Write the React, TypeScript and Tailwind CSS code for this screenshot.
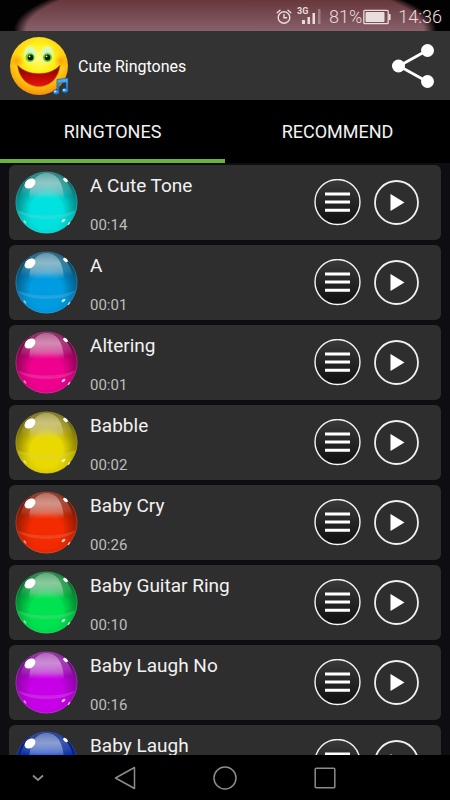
import { useState } from "react";

type Tone = {
  name: string;
  time: string;
  color: string;
  dark: string;
  top: string;
};

const tones: Tone[] = [
  { name: "A Cute Tone", time: "00:14", color: "#00e2df", dark: "#04605f", top: "#a6cfce" },
  { name: "A", time: "00:01", color: "#009ce2", dark: "#04405f", top: "#a4c6d2" },
  { name: "Altering", time: "00:01", color: "#f0008f", dark: "#64063e", top: "#dba2c1" },
  { name: "Babble", time: "00:02", color: "#ead900", dark: "#5c5606", top: "#d0ca90" },
  { name: "Baby Cry", time: "00:26", color: "#f42a00", dark: "#651504", top: "#d8a89f" },
  { name: "Baby Guitar Ring", time: "00:10", color: "#00e24f", dark: "#046025", top: "#a2d1b0" },
  { name: "Baby Laugh No", time: "00:16", color: "#c800e8", dark: "#6b0b7c", top: "#d6a4dd" },
  { name: "Baby Laugh", time: "", color: "#0038dc", dark: "#04196f", top: "#a4b4da" },
];

const tabs = ["RINGTONES", "RECOMMEND"];

function StatusBar() {
  return (
    <div className="flex h-[31px] shrink-0 items-center justify-end bg-[radial-gradient(ellipse_47%_58px_at_50%_100%,transparent_94%,#030202_100%),linear-gradient(#67383c,#87606a)] pt-[2px] pr-2 text-[#eadcdc]">
      <svg className="mr-[5px] size-4" viewBox="0 0 16 16" fill="none" stroke="currentColor" strokeWidth="1.4" strokeLinecap="round">
        <circle cx="8" cy="8.500" r="5.800" />
        <path d="M8 5.500v3.200h2.600M1.200 3.700 4 1.300M14.800 3.700 12 1.300" />
      </svg>
      <svg className="mr-2 h-5 w-6" viewBox="0 0 24 20" fill="currentColor">
        <text x="0" y="7" fontSize="9" fontWeight="700" fontFamily="Roboto, sans-serif">3G</text>
        <path d="M5 13h3v4H5zM10.500 10h2.500v7h-2.500zM15.500 6H18v11h-2.500z" />
        <path d="M21 2h2.500v15H21z" opacity=".35" />
      </svg>
      <span className="text-lg font-light">81%</span>
      <svg className="mr-[7px] ml-px h-4 w-7" viewBox="0 0 28 16" fill="none" stroke="currentColor">
        <rect x=".8" y="1.300" width="24.400" height="13.400" rx="1" strokeWidth="1.300" />
        <path d="M3 3.500h18v9H3z" fill="currentColor" />
        <path d="M26.800 5v6" strokeWidth="1.600" />
      </svg>
      <span className="text-lg font-light">14:36</span>
    </div>
  );
}

function SmileyLogo() {
  return (
    <svg className="size-[60px]" viewBox="0 0 60 60">
      <defs>
        <radialGradient id="face" cx=".5" cy=".36" r=".68">
          <stop offset="0" stopColor="#fffd8a" />
          <stop offset=".35" stopColor="#fff21c" />
          <stop offset=".66" stopColor="#ffcb10" />
          <stop offset="1" stopColor="#f4820a" />
        </radialGradient>
        <radialGradient id="eye">
          <stop offset="0" stopColor="#b8f3a0" />
          <stop offset=".6" stopColor="#d2f8d8" />
          <stop offset="1" stopColor="#e4fbb8" stopOpacity=".25" />
        </radialGradient>
        <radialGradient id="cheek">
          <stop offset="0" stopColor="#f47a00" stopOpacity=".55" />
          <stop offset="1" stopColor="#f47a00" stopOpacity="0" />
        </radialGradient>
        <linearGradient id="mouth" x1="0" y1="0" x2="0" y2="1">
          <stop offset="0" stopColor="#6a0a00" />
          <stop offset=".5" stopColor="#b80804" />
          <stop offset="1" stopColor="#e8140c" />
        </linearGradient>
        <linearGradient id="note" x1="0" y1="0" x2="0" y2="1">
          <stop offset="0" stopColor="#58b2f4" />
          <stop offset="1" stopColor="#1c7dd4" />
        </linearGradient>
      </defs>
      <circle cx="30" cy="30" r="29" fill="url(#face)" />
      <circle cx="8" cy="25" r="7" fill="url(#cheek)" />
      <circle cx="52" cy="25" r="7" fill="url(#cheek)" />
      <ellipse cx="21" cy="18.500" rx="6.500" ry="9.500" fill="url(#eye)" />
      <ellipse cx="38.500" cy="18.500" rx="6.500" ry="9.500" fill="url(#eye)" />
      <circle cx="21" cy="21.500" r="4.600" fill="#70d425" />
      <circle cx="38.500" cy="21.500" r="4.600" fill="#70d425" />
      <circle cx="21.500" cy="21.500" r="2.900" fill="#101a05" />
      <circle cx="38.500" cy="21.500" r="2.900" fill="#101a05" />
      <circle cx="20.500" cy="20.300" r=".9" fill="#fff" />
      <circle cx="37.500" cy="20.300" r=".9" fill="#fff" />
      <path d="M8.500 29c5 5.500 12 8.500 21.500 8.500S46 34.500 51 29C50 41 42 50.500 30 50.500S9.500 41 8.500 29z" fill="url(#mouth)" stroke="#c96a00" strokeWidth=".5" />
      <g fill="url(#note)" stroke="#0d4f96" strokeWidth=".6">
        <path d="M48 43.500 59 42v12h-2v-7.500l-7 1v8h-2z" />
        <ellipse cx="47" cy="56" rx="3" ry="2.300" />
        <ellipse cx="56" cy="54.500" rx="3" ry="2.300" />
      </g>
      <circle cx="46" cy="55.500" r=".9" fill="#d6f0ff" />
      <circle cx="55" cy="54" r=".9" fill="#d6f0ff" />
    </svg>
  );
}

function Ball({ id, tone }: { id: string; tone: Tone }) {
  return (
    <svg className="size-[63px] shrink-0" viewBox="0 0 63 63">
      <defs>
        <radialGradient id={`body-${id}`} cx=".5" cy=".62" r=".62">
          <stop offset="0" stopColor={tone.color} />
          <stop offset=".42" stopColor={tone.color} />
          <stop offset="1" stopColor={tone.dark} />
        </radialGradient>
        <linearGradient id={`top-${id}`} x1="0" y1="0" x2="0" y2="1">
          <stop offset="0" stopColor={tone.top} stopOpacity=".55" />
          <stop offset=".4" stopColor={tone.top} stopOpacity=".9" />
          <stop offset=".75" stopColor={tone.top} stopOpacity=".55" />
          <stop offset="1" stopColor={tone.top} stopOpacity="0" />
        </linearGradient>
        <radialGradient id={`low-${id}`} cx=".5" cy=".7" r=".6">
          <stop offset="0" stopColor={tone.color} stopOpacity=".9" />
          <stop offset="1" stopColor={tone.color} stopOpacity=".35" />
        </radialGradient>
      </defs>
      <circle cx="31.500" cy="31.500" r="31" fill={`url(#body-${id})`} />
      <path d="M31.500 1C44 1 54 8 58 25H5C9 8 19 1 31.500 1z" fill={`url(#top-${id})`} opacity=".4" />
      <path d="M31.500 2C41 2 48 10 49 28H14C15 10 22 2 31.500 2z" fill={`url(#top-${id})`} opacity=".85" />
      <path d="M2 39c17 6 42 6 59 0-4 15-16 23-29.500 23S6 54 2 39z" fill={`url(#low-${id})`} />
      <path d="M3 40c16 6 41 6 57 0-5 6-17 8-28.500 8S8 46 3 40z" fill={tone.top} opacity=".22" />
      <circle cx="31.500" cy="31.500" r="30.600" fill="none" stroke={tone.top} strokeOpacity=".3" strokeWidth=".8" />
      <ellipse cx="15" cy="12.500" rx="6" ry="4.300" fill="#fff" transform="rotate(-38 15 12.500)" />
      <ellipse cx="50.500" cy="9" rx="2.800" ry="1.600" fill="#fff" transform="rotate(40 50.500 9)" />
      <ellipse cx="48.500" cy="49.500" rx="2.200" ry="1.300" fill="#fff" opacity=".8" transform="rotate(-40 48.500 49.500)" />
      <ellipse cx="54" cy="52.500" rx="2" ry=".7" fill="#fff" opacity=".7" transform="rotate(-50 54 52.500)" />
      <ellipse cx="10" cy="51" rx="2" ry=".8" fill="#fff" opacity=".6" transform="rotate(48 10 51)" />
    </svg>
  );
}

function ToneRow({ tone, id }: { tone: Tone; id: string }) {
  return (
    <li className="flex h-[75px] shrink-0 items-center rounded-md bg-[#2e2e2e] pr-[22px] pl-[6px]">
      <Ball id={id} tone={tone} />
      <div className="ml-3 flex h-[60px] min-w-0 flex-1 flex-col justify-between pt-px">
        <h2 className="truncate text-[19px] leading-6 text-[#f2f2f2]">{tone.name}</h2>
        {tone.time && <p className="text-[15px] leading-4 text-[#bdbdbd]">{tone.time}</p>}
      </div>
      <button aria-label={`Options for ${tone.name}`} className="mr-[13px]">
        <svg className="size-[47px]" viewBox="0 0 47 47">
          <defs>
            <linearGradient id={`menu-${id}`} x1="0" y1="0" x2="0" y2="1">
              <stop offset="0" stopColor="#3a3a3a" />
              <stop offset="1" stopColor="#101010" />
            </linearGradient>
          </defs>
          <circle cx="23.500" cy="23" r="22.500" fill={`url(#menu-${id})`} stroke="#f4f4f4" strokeWidth="1.400" />
          <path d="M11 15h25M11 23h25M11 31.300h25" stroke="#fff" strokeWidth="3" />
        </svg>
      </button>
      <button aria-label={`Play ${tone.name}`}>
        <svg className="size-[45px]" viewBox="0 0 45 45">
          <circle cx="22.500" cy="22.500" r="21.500" fill="none" stroke="#f0f0f0" strokeWidth="1.800" />
          <path d="M16.500 14v17L30.500 22.500z" fill="#fff" />
        </svg>
      </button>
    </li>
  );
}

function NavBar() {
  return (
    <footer className="grid h-[45px] shrink-0 grid-cols-[3fr_4fr_4fr_4fr_3fr] bg-black text-[#8c8c8c]">
      <button aria-label="Hide bar" className="flex items-center justify-center">
        <svg className="h-2 w-3" viewBox="0 0 12 8" fill="none" stroke="currentColor" strokeWidth="1.800">
          <path d="m1 1.500 5 4.500 5-4.500" />
        </svg>
      </button>
      <button aria-label="Back" className="flex items-center justify-center">
        <svg className="size-6" viewBox="0 0 24 24" fill="none" stroke="currentColor" strokeWidth="1.500" strokeLinejoin="round">
          <path d="M21.500 1.500v21L2.500 12z" />
        </svg>
      </button>
      <button aria-label="Home" className="flex items-center justify-center">
        <svg className="size-6" viewBox="0 0 24 24" fill="none" stroke="currentColor" strokeWidth="1.500">
          <circle cx="12" cy="12" r="11" />
        </svg>
      </button>
      <button aria-label="Recent apps" className="flex items-center justify-center">
        <svg className="size-6" viewBox="0 0 24 24" fill="none" stroke="currentColor" strokeWidth="1.500">
          <rect x="2.200" y="2.200" width="19.600" height="19.600" rx="1" />
        </svg>
      </button>
    </footer>
  );
}

export default function App() {
  const [active, setActive] = useState(0);

  return (
    <div className="flex h-screen flex-col overflow-hidden bg-[#0d0d12] font-[Roboto,sans-serif]">
      <StatusBar />
      <header className="flex h-[69px] shrink-0 items-center bg-[#333333] pr-[15px] pl-[9px]">
        <SmileyLogo />
        <h1 className="ml-[9px] flex-1 pt-[2px] text-base text-white">Cute Ringtones</h1>
        <button aria-label="Share">
          <svg className="h-[46px] w-[44px]" viewBox="0 0 44 46" fill="#fff">
            <path d="M36 7.500 8 23l28 15.500" fill="none" stroke="#fff" strokeWidth="2.800" />
            <circle cx="36.500" cy="7.500" r="6.500" />
            <circle cx="7.500" cy="23" r="6.500" />
            <circle cx="36.500" cy="38.500" r="6.500" />
          </svg>
        </button>
      </header>
      <nav className="grid h-[63px] shrink-0 grid-cols-2 bg-black">
        {tabs.map((tab, i) => (
          <button
            key={tab}
            onClick={() => setActive(i)}
            className={`border-b-4 pt-1 text-lg text-[#f2f2f2] ${active === i ? "border-[#6bb43f]" : "border-transparent"}`}
          >
            {tab}
          </button>
        ))}
      </nav>
      <ul className="flex min-h-0 flex-1 flex-col gap-[5px] overflow-hidden px-[9px] pt-[2px]">
        {tones.map((tone, i) => (
          <ToneRow key={tone.name} tone={tone} id={String(i)} />
        ))}
      </ul>
      <NavBar />
    </div>
  );
}
